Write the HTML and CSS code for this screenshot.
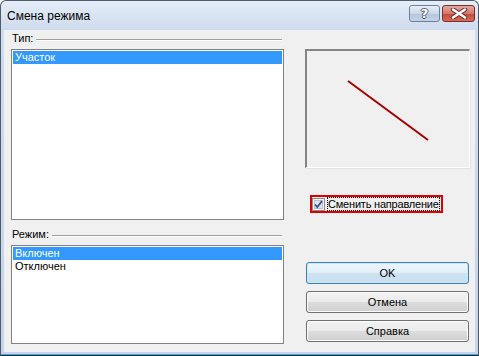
FILE: index.html
```html
<!DOCTYPE html>
<html lang="ru">
<head>
  <meta charset="UTF-8">
  <meta name="viewport" content="width=device-width, initial-scale=1.0">
  <title>Смена режима</title>
  <link rel="stylesheet" href="styles.css">
</head>
<body>
  <div class="window">
    <div class="titlebar">
      <span class="title">Смена режима</span>
      <div class="caption-buttons">
        <button class="cap-btn help"><span>?</span></button>
        <button class="cap-btn close">
          <svg width="18" height="11" viewBox="0 0 18 11">
            <path d="M3 1.5 L15 9.5 M15 1.5 L3 9.5" stroke="#6b2a26" stroke-width="4.4" stroke-linecap="round"/>
            <path d="M3 1.5 L15 9.5 M15 1.5 L3 9.5" stroke="#ffffff" stroke-width="2.6" stroke-linecap="round"/>
          </svg>
        </button>
      </div>
    </div>

    <div class="client">
      <div class="left-col">
        <div class="group-label"><span>Тип:</span><div class="etched"></div></div>
        <ul class="listbox type-list">
          <li class="selected">Участок</li>
        </ul>

        <div class="group-label mode-label"><span>Режим:</span><div class="etched"></div></div>
        <ul class="listbox mode-list">
          <li class="selected">Включен</li>
          <li>Отключен</li>
        </ul>
      </div>

      <div class="right-col">
        <div class="preview">
          <svg width="163" height="117" viewBox="0 0 163 117">
            <line x1="41" y1="30" x2="121" y2="89" stroke="#a80000" stroke-width="2"/>
          </svg>
        </div>

        <label class="check-row">
          <span class="checkbox">
            <svg width="13" height="13" viewBox="0 0 13 13">
              <rect x="0.5" y="0.5" width="12" height="12" fill="#f4f4f4" stroke="#8f8f8f"/>
              <rect x="2.5" y="2.5" width="8" height="8" fill="#dfe4ec" stroke="#b8c0cc"/>
              <path d="M3 6.5 L5.3 9 L10 3" fill="none" stroke="#3b4f8f" stroke-width="1.8"/>
            </svg>
          </span>
          <span class="check-text">Сменить направление</span>
        </label>

        <div class="buttons">
          <button class="btn default">OK</button>
          <button class="btn">Отмена</button>
          <button class="btn">Справка</button>
        </div>
      </div>
    </div>
  </div>
</body>
</html>
```

FILE: styles.css
```css
html, body {
  margin: 0;
  padding: 0;
  background: #ffffff;
  font-family: "Liberation Sans", Arial, sans-serif;
  font-size: 11px;
  color: #000;
}

.window {
  width: 479px;
  height: 356px;
  box-sizing: border-box;
  border: 1px solid #4f5b69;
  border-bottom-color: #1c2a3a;
  border-radius: 6px 6px 0 0;
  background: linear-gradient(#e4edf8 0, #cfdcee 28px, #c3d5ec 100%);
  padding: 0 3px 3px 3px;
  display: flex;
  flex-direction: column;
  box-shadow: inset 0 -1px 0 #3fa6e0;
}

.titlebar {
  height: 29px;
  display: flex;
  align-items: flex-start;
  justify-content: space-between;
}

.title {
  font-size: 12px;
  margin-top: 8px;
  margin-left: 3px;
  color: #000;
}

.caption-buttons {
  display: flex;
  gap: 2px;
  margin-top: 4px;
}

.cap-btn {
  height: 17px;
  padding: 0;
  border-radius: 3px;
  display: flex;
  align-items: center;
  justify-content: center;
}

.cap-btn.help {
  width: 31px;
  border: 1px solid #6f7f96;
  background: linear-gradient(#e7eef7, #ccd8e7 50%, #b5c6dc 51%, #c4d4e8);
}

.cap-btn.help span {
  font-family: "DejaVu Sans", sans-serif;
  font-weight: bold;
  font-size: 13px;
  line-height: 1;
  color: #fff;
  text-shadow: 1px 0 0 #5a6678, -1px 0 0 #5a6678, 0 1px 0 #5a6678, 0 -1px 0 #5a6678;
}

.cap-btn.close {
  width: 33px;
  border: 1px solid #7a2e2a;
  background: linear-gradient(#e6a89f, #d2786b 50%, #c24a3c 51%, #d66a58);
}

.client {
  flex: 1;
  background: #f0f0f0;
  display: flex;
  padding: 2px 0 0 7px;
}

.left-col {
  width: 273px;
  display: flex;
  flex-direction: column;
}

.group-label {
  height: 13px;
  display: flex;
  align-items: center;
  margin-bottom: 4px;
}

.group-label span {
  line-height: 13px;
  padding-left: 1px;
}

.etched {
  flex: 1;
  height: 1px;
  margin-left: 3px;
  margin-right: 2px;
  margin-top: 1px;
  background: #a0a0a0;
  box-shadow: 0 1px 0 #ffffff;
}

.mode-label {
  margin-top: 8px;
}

.listbox {
  list-style: none;
  margin: 0;
  padding: 1px;
  background: #fff;
  border: 1px solid #828282;
  box-sizing: border-box;
}

.listbox li {
  height: 13px;
  line-height: 13px;
  padding-left: 2px;
}

.listbox li.selected {
  background: #3399ff;
  color: #fff;
}

.type-list {
  height: 171px;
}

.mode-list {
  height: 99px;
}

.right-col {
  width: 165px;
  margin-left: 21px;
  display: flex;
  flex-direction: column;
  padding-top: 17px;
}

.preview {
  width: 165px;
  height: 119px;
  box-sizing: border-box;
  border-style: solid;
  border-width: 2px 1px 1px 2px;
  border-color: #858585 #ffffff #ffffff #858585;
  box-shadow: 1px 1px 0 #e3e3e3;
}

.preview svg {
  display: block;
}

.check-row {
  align-self: flex-start;
  margin-top: 27px;
  margin-left: 5px;
  height: 18px;
  box-sizing: border-box;
  border: 2px solid #e00000;
  display: flex;
  align-items: center;
  padding: 0 1px 0 0;
}

.checkbox svg {
  display: block;
}

.check-text {
  margin-left: 2px;
  border: 1px dotted #000;
  line-height: 12px;
  padding: 0;
  letter-spacing: -0.2px;
}

.buttons {
  display: flex;
  flex-direction: column;
  gap: 7px;
  margin-top: 49px;
  margin-left: 1px;
}

.btn {
  width: 163px;
  height: 22px;
  font-family: "Liberation Sans", Arial, sans-serif;
  font-size: 11px;
  font-weight: normal;
  color: #000;
  border: 1px solid #707070;
  border-radius: 3px;
  background: linear-gradient(#f2f2f2, #ebebeb 50%, #dddddd 51%, #cfcfcf);
  box-shadow: inset 0 0 0 1px #fcfcfc;
  padding: 0;
}

.btn.default {
  border-color: #3c7fb1;
  box-shadow: inset 0 0 0 1px #c9e8f8;
  background: linear-gradient(#eef6fb, #e1eef7 50%, #cfe3f1 51%, #c8dfef);
}
```
